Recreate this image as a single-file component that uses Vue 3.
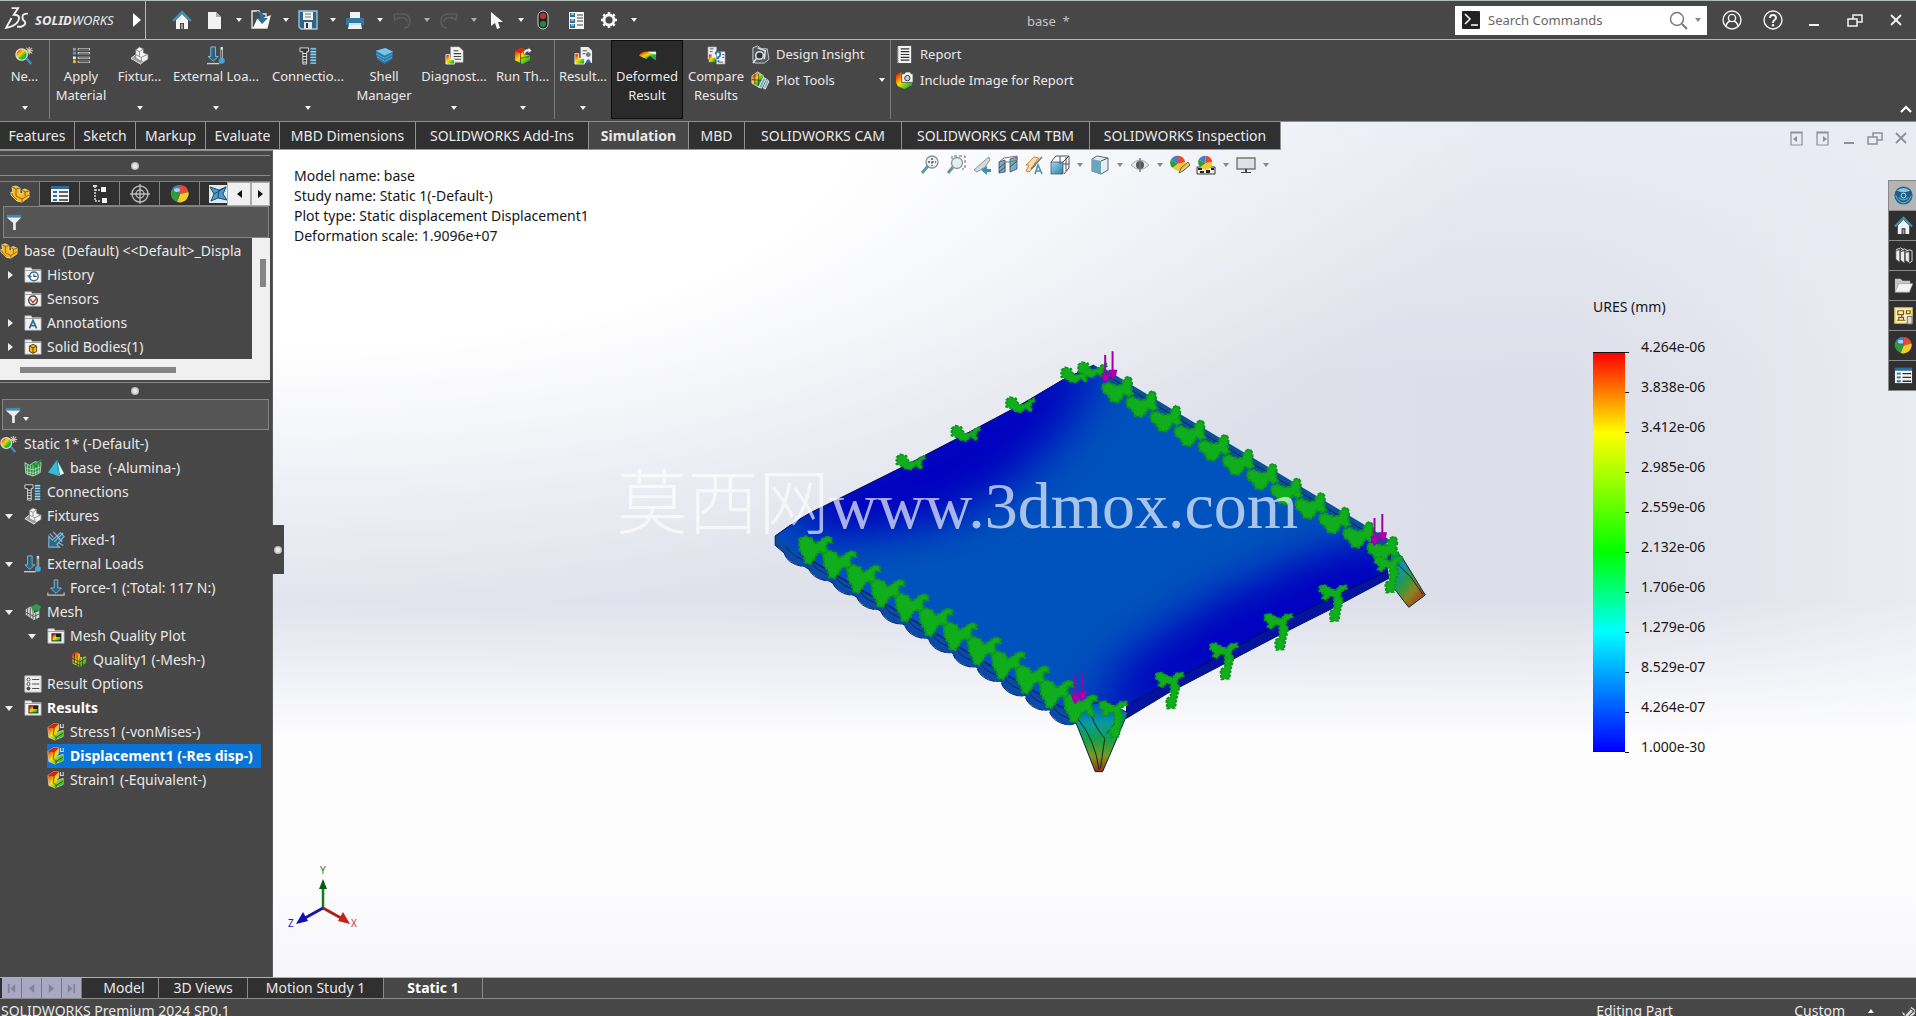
<script setup>
import { ref } from 'vue'

const search = ref('')
const filterTop = ref('')
const filterBottom = ref('')

const quick = [
  { icon: 'new', label: 'New' },
  { icon: 'open', label: 'Open' },
  { icon: 'save', label: 'Save' },
  { icon: 'print', label: 'Print' },
  { icon: 'undo', label: 'Undo', off: true },
  { icon: 'redo', label: 'Redo', off: true },
  { icon: 'cursor', label: 'Select' },
]

const commands = [
  { text: 'Ne...', icon: 'study', drop: true, sep: true },
  { text: 'Apply Material', icon: 'material' },
  { text: 'Fixtur...', icon: 'fixture', drop: true },
  { text: 'External Loa...', icon: 'loads', drop: true },
  { text: 'Connectio...', icon: 'connections', drop: true },
  { text: 'Shell Manager', icon: 'shell' },
  { text: 'Diagnost...', icon: 'diag', drop: true },
  { text: 'Run Th...', icon: 'run', drop: true, sep: true },
  { text: 'Result...', icon: 'results', drop: true },
  { text: 'Deformed Result', icon: 'deformed', on: true },
  { text: 'Compare Results', icon: 'compare' },
]

const tabs = ['Features', 'Sketch', 'Markup', 'Evaluate', 'MBD Dimensions', 'SOLIDWORKS Add-Ins',
  'Simulation', 'MBD', 'SOLIDWORKS CAM', 'SOLIDWORKS CAM TBM', 'SOLIDWORKS Inspection']

const paneTabs = ['part', 'props', 'config', 'target', 'ball', 'cam']

const featureTree = [
  { text: 'base  (Default) <<Default>_Displa', icons: ['part'], level: 0 },
  { text: 'History', icons: ['history'], level: 1, twisty: 'closed' },
  { text: 'Sensors', icons: ['sensors'], level: 1 },
  { text: 'Annotations', icons: ['annot'], level: 1, twisty: 'closed' },
  { text: 'Solid Bodies(1)', icons: ['bodies'], level: 1, twisty: 'closed' },
]

const studyTree = [
  { text: 'Static 1* (-Default-)', icons: ['study'], level: 0 },
  { text: 'base  (-Alumina-)', icons: ['meshbody', 'tet'], level: 1 },
  { text: 'Connections', icons: ['connections'], level: 1 },
  { text: 'Fixtures', icons: ['fixture'], level: 1, twisty: 'open' },
  { text: 'Fixed-1', icons: ['fixed'], level: 2 },
  { text: 'External Loads', icons: ['loads'], level: 1, twisty: 'open' },
  { text: 'Force-1 (:Total: 117 N:)', icons: ['force'], level: 2 },
  { text: 'Mesh', icons: ['mesh'], level: 1, twisty: 'open' },
  { text: 'Mesh Quality Plot', icons: ['plotfolder'], level: 2, twisty: 'open' },
  { text: 'Quality1 (-Mesh-)', icons: ['quality'], level: 3 },
  { text: 'Result Options', icons: ['options'], level: 1 },
  { text: 'Results', icons: ['plotfolder'], level: 1, twisty: 'open', bold: true },
  { text: 'Stress1 (-vonMises-)', icons: ['plot'], level: 2 },
  { text: 'Displacement1 (-Res disp-)', icons: ['plot'], level: 2, bold: true, selected: true },
  { text: 'Strain1 (-Equivalent-)', icons: ['plot'], level: 2 },
]

const views = [
  { icon: 'zoomfit' }, { icon: 'zoomarea' }, { icon: 'prev' }, { icon: 'section' }, { icon: 'dynannot' },
  { icon: 'orient', drop: true }, { icon: 'display', drop: true }, { icon: 'eye', drop: true },
  { icon: 'balledit' }, { icon: 'scene', drop: true }, { icon: 'monitor', drop: true },
]

const task = ['globe', 'home', 'library', 'folder', 'palette', 'ball', 'props']

const info = ['Model name: base', 'Study name: Static 1(-Default-)',
  'Plot type: Static displacement Displacement1', 'Deformation scale: 1.9096e+07']

const scale = ['4.264e-06', '3.838e-06', '3.412e-06', '2.985e-06', '2.559e-06', '2.132e-06',
  '1.706e-06', '1.279e-06', '8.529e-07', '4.264e-07', '1.000e-30']

const line = (n, x, y, dx, dy) => Array.from({ length: n }, (_, i) => [x + dx * i, y + dy * i])
const fixtures = [
  { shape: 'fx-left', at: line(12, 127, 627, 55.6, 43.2) },
  { shape: 'fx-right', at: line(12, 828, 148, 55.6, 43.6) },
  { shape: 'fx-top', at: [[345, 367], [472, 281], [598, 195], [725, 106], [764, 90]] },
  { shape: 'fx-front', at: [[815, 1108], [945, 1022], [1070, 934], [1196, 846], [1322, 760], [1450, 674]] },
]
const forces = [[796, 45], [813, 34], [1417, 534], [1435, 522], [727, 1008], [743, 998]]
const scallops = line(12, 86, 655, 55.6, 43.2)
</script>

<template>
  <svg class="defs" width="0" height="0" aria-hidden="true">
    <defs>
      <linearGradient id="rain" x1="0" y1="0" x2="1" y2="1">
        <stop offset="0.1" stop-color="#f01800" /><stop offset="0.4" stop-color="#ffd800" />
        <stop offset="0.65" stop-color="#22c020" /><stop offset="1" stop-color="#1890d0" />
      </linearGradient>
      <linearGradient id="warm" x1="0" y1="0" x2="1" y2="1">
        <stop offset="0.1" stop-color="#f02000" /><stop offset="0.45" stop-color="#ffe000" />
        <stop offset="0.8" stop-color="#30c020" /><stop offset="1" stop-color="#109030" />
      </linearGradient>
      <linearGradient id="blue" x1="0" y1="0" x2="1" y2="1">
        <stop offset="0" stop-color="#9fd8ef" /><stop offset="1" stop-color="#2b7fa8" />
      </linearGradient>
    </defs>
    <symbol id="home" viewBox="0 0 20 20"><path d="M4 10v9h4v-6h4v6h4v-9l-6-6z" fill="#f4f4f4" /><path d="M9 14h2v5H9z" fill="#999" /><path d="M1 11 10 2l9 9" fill="none" stroke="#3f8db8" stroke-width="2.4" /></symbol>
    <symbol id="new" viewBox="0 0 20 20"><path d="M4 2h8l5 5v12H4z" fill="#f2f2f2" /><path d="M12 2v5h5z" fill="#aaa" /></symbol>
    <symbol id="open" viewBox="0 0 20 20"><path d="M1 1h7l2 3h5v4l4-2-3 12H1z" fill="#4a4a4a" stroke="#eee" stroke-width="1.300" /><path d="M2 18 6 9l13-3-3 12z" fill="#fafafa" /><path d="M5 1q8 0 8 7h4l-6 6-5-6h3q0-4-4-7z" fill="#2d6f98" /></symbol>
    <symbol id="save" viewBox="0 0 20 20"><path d="M1 1h18v18H3l-2-2z" fill="#2f6488" stroke="#9cc9e6" stroke-width="1.300" /><path d="M5 2h10v8H5z" fill="#f0f0f0" /><path d="M7 4h6M7 7h6" stroke="#777" /><path d="M6 12h8v7H6z" fill="#dfe6ea" /><path d="M8 13h2v5H8z" fill="#333" /></symbol>
    <symbol id="print" viewBox="0 0 20 20"><path d="M5 2h10v6H5zM4 14h12l1 5H3z" fill="#f2f2f2" /><path d="M1 8h18v7H1z" fill="#2f7aa5" /><path d="M4 13h12v2H4z" fill="#cde4f0" /></symbol>
    <symbol id="undo" viewBox="0 0 20 20"><path d="M2 4h8q8 0 8 7t-6 7M6 8h5q4 0 4 4M2 4l1 6 5-3" fill="none" stroke="#6a6a6a" stroke-width="1.6" /></symbol>
    <symbol id="redo" viewBox="0 0 20 20"><path d="M18 4h-8q-8 0-8 7t6 7M14 8H9q-4 0-4 4M18 4l-1 6-5-3" fill="none" stroke="#6a6a6a" stroke-width="1.6" /></symbol>
    <symbol id="cursor" viewBox="0 0 20 20"><path d="M5 2v14l4-3 2 6 3-1-2-6h5z" fill="#f6f6f6" /></symbol>
    <symbol id="traffic" viewBox="0 0 20 20"><rect x="5" y="1" width="10" height="18" rx="5" fill="#222" stroke="#ccc" /><circle cx="10" cy="6" r="3" fill="#b8342c" /><circle cx="10" cy="14" r="3" fill="#258a3a" /></symbol>
    <symbol id="list" viewBox="0 0 20 20"><path d="M3 2h15v17H3z" fill="#f4f4f4" /><path d="M4 3h5v4H4zM4 9h5v4H4zM4 14h5v4H4z" fill="#2f6f96" /><path d="M11 5h6M11 8h6M11 11h6M11 15h6" stroke="#444" /><path d="M5 4h3M5 10h3M5 15h3" stroke="#fff" /></symbol>
    <symbol id="gear" viewBox="0 0 20 20"><circle cx="10" cy="10" r="5" fill="none" stroke="#f4f4f4" stroke-width="3" /><path d="M10 2v4M10 14v4M2 10h4M14 10h4M4.300 4.300l3 3M12.700 12.700l3 3M15.700 4.300l-3 3M7.300 12.700l-3 3" stroke="#f4f4f4" stroke-width="2.6" /><circle cx="10" cy="10" r="3.200" fill="#474747" /></symbol>
    <symbol id="user" viewBox="0 0 20 20"><g fill="none" stroke="#f4f4f4" stroke-width="1.400"><circle cx="10" cy="10" r="9" /><circle cx="10" cy="8" r="3.600" /><path d="M4 16q1-4 4-5M16 16q-1-4-4-5" /></g></symbol>
    <symbol id="help" viewBox="0 0 20 20"><g fill="none" stroke="#f4f4f4"><circle cx="10" cy="10" r="9" stroke-width="1.400" /><path d="M7 8q0-3 3-3t3 3q0 1-1.500 2T10 13" stroke-width="1.900" /></g><circle cx="10" cy="15.300" r="1.200" fill="#f4f4f4" /></symbol>
    <symbol id="min" viewBox="0 0 20 20"><path d="M5 14h10v2H5z" fill="currentColor" /></symbol>
    <symbol id="restore" viewBox="0 0 20 20"><path d="M3 9h9v7H3zM8 9V5h9v7h-5" fill="none" stroke="currentColor" stroke-width="1.500" /></symbol>
    <symbol id="close" viewBox="0 0 20 20"><path d="m5 5 10 10M15 5 5 15" stroke="currentColor" stroke-width="1.800" /></symbol>
    <symbol id="dockl" viewBox="0 0 20 20"><path d="M4 4h11v13H4zM4 5h11" fill="none" stroke="currentColor" stroke-width="1.200" /><path d="M10 8v6l-4-3z" fill="currentColor" /></symbol>
    <symbol id="dockr" viewBox="0 0 20 20"><path d="M4 4h11v13H4zM4 5h11" fill="none" stroke="currentColor" stroke-width="1.200" /><path d="M10 8v6l4-3z" fill="currentColor" /></symbol>
    <symbol id="prompt" viewBox="0 0 20 20"><rect x="1" y="1" width="18" height="18" rx="1" fill="#232323" /><path d="m4 4 5 5-5 5M10 15h7" fill="none" stroke="#fff" stroke-width="1.500" /></symbol>
    <symbol id="search" viewBox="0 0 20 20"><circle cx="9" cy="9" r="6.500" fill="none" stroke="#777" stroke-width="1.400" /><path d="m14 14 5 5" stroke="#777" stroke-width="2" /></symbol>

    <symbol id="study" viewBox="0 0 20 20"><circle cx="7" cy="9" r="6" fill="url(#rain)" stroke="#e4e4e4" stroke-width="1.300" /><path d="m12 13 5 6" stroke="#3c94cc" stroke-width="2.400" /><path d="m12 2 6 6M18 2l-6 6M15 1v8M11 5h8" stroke="#d8c8a8" stroke-width="1.200" /></symbol>
    <symbol id="material" viewBox="0 0 20 20"><path d="M1 2h3v3H1z" fill="#999" /><path d="M1 6h3v3H1z" fill="#55a0cc" /><path d="M1 11h3v3H1z" fill="#eee" /><path d="M1 15h3v3H1z" fill="#e8c020" /><path d="M6 3.500h13M6 7.500h13M6 12.500h13M6 16.500h13" stroke="#ddd" stroke-width="2.200" /><path d="M7 3.500h11M7 7.500h11M7 12.500h11M7 16.500h11" stroke="#333" /></symbol>
    <symbol id="fixture" viewBox="0 0 20 20"><path d="m1 13 5-4 11 5-6 5z" fill="#9a9fa2" stroke="#efefef" /><path d="m6 4 4-3 4 2v4l5 2v5l-5 3-8-4z" fill="#f4f4f4" stroke="#777" stroke-width=".8" /><path d="m6 9 6 3v4M12 12l6-3M6 4l4 2v4M10 6l4-3" fill="none" stroke="#888" /></symbol>
    <symbol id="loads" viewBox="0 0 20 20"><path d="M4 1h5v10h3l-5.500 5L1 11h3z" fill="#2c617f" stroke="#86bdda" /><path d="M0 18.500h13" stroke="#ccc" stroke-width="1.500" /><path d="M15.500 1v12" stroke="#ddd" stroke-width="2.600" /><path d="M15.500 4v10" stroke="#333" /><circle cx="15.500" cy="15.500" r="3.200" fill="#4aa3d8" /></symbol>
    <symbol id="connections" viewBox="0 0 20 20"><path d="M1 2h9v4H8v13H4V6H1z" fill="#333" stroke="#ddd" /><path d="M4 8h4M4 11h4M4 14h4M4 17h4" stroke="#eee" /><path d="M12 1h6v18h-6z" fill="#2d6685" /><path d="M12 3h6M12 6h6M12 9h6M12 12h6M12 15h6M12 18h6" stroke="#9fd0ea" stroke-width="1.500" /></symbol>
    <symbol id="shell" viewBox="0 0 20 20"><path d="m1 5 10-3 8 4-1 8-8 5-8-5z" fill="#2a7aa6" /><path d="m1 5 10-3 8 4-9 4z" fill="#7cc4e8" /><path d="m1 8 9 5 8-4M2 11l8 5 8-4" fill="none" stroke="#5aa8d0" /></symbol>
    <symbol id="diag" viewBox="0 0 20 20"><path d="M6 1h9l4 4v12H6z" fill="#f4f4f4" stroke="#bbb" stroke-width=".6" /><path d="M9 5h5M9 8h8M9 11h8M9 14h8" stroke="#444" stroke-width="1.200" /><path d="M1 9h4v5h5v5H1z" fill="url(#warm)" stroke="#fff" stroke-width=".8" /></symbol>
    <symbol id="run" viewBox="0 0 20 20"><path d="m2 5 6-3 5 2v5l5 1v5l-8 4-8-4z" fill="url(#warm)" /><path d="m2 5 6-3 5 2-5 4z" fill="#e02010" /><path d="M8 8v10M8 13l9-2" stroke="#333" stroke-width=".8" /><path d="M11 8q0-5 5-5V1l4 4-4 3V6q-3 0-3 3z" fill="#eee" stroke="#333" stroke-width=".6" /></symbol>
    <symbol id="results" viewBox="0 0 20 20"><path d="M7 1h8l4 4v13H7z" fill="#f0f0f0" /><path d="M9 5h5M9 8h3" stroke="#555" /><circle cx="15" cy="9" r="2.500" fill="#6a7a90" /><path d="M12 18q3-8 6 0z" fill="#31659c" /><path d="M1 8h4v5h6v6H1z" fill="url(#warm)" stroke="#fff" stroke-width=".8" /></symbol>
    <symbol id="deformed" viewBox="0 0 20 20"><path d="M1 10q3-5 9-4h9v9l-4-2v-1q-4-3-6 2z" fill="url(#rain)" /><path d="M10 6h9v3l-5-1z" fill="#e8f4ff" /></symbol>
    <symbol id="compare" viewBox="0 0 20 20"><path d="M1 1h9v13H1zM10 6h9v13h-9z" fill="#f2f2f2" stroke="#999" stroke-width=".7" /><path d="M3 3h4M3 6h3M16 9h2M16 12h2M12 17h5" stroke="#555" /><path d="M2 9h3v3h4v5H2z" fill="url(#warm)" /><path d="M9 9q0-3 2.500-3T14 9q0 2-2.500 3v2M11 16h2" fill="none" stroke="#1a78b8" stroke-width="1.800" /></symbol>
    <symbol id="insight" viewBox="0 0 20 20"><path d="m2 3 5-2 4 3h6l2 11-5 4H4l-2-3z" fill="#50585c" stroke="#c9d2d6" /><circle cx="9" cy="11" r="4" fill="#333" stroke="#cfe3ee" stroke-width="1.600" /><path d="m6 14-4 5M7 3l8 3-1 9" stroke="#dde6ea" stroke-width="1.600" fill="none" /></symbol>
    <symbol id="plottools" viewBox="0 0 20 20"><path d="m1 5 6-4 6 4v8l-5 4-7-4z" fill="url(#rain)" stroke="#ddd" stroke-width=".9" /><path d="M4 3v11M8 3v12M1 9l11 1" stroke="#333" stroke-width=".8" /><path d="m8 17 5-10 3 1-5 10zM13 18l4-9 2 2-4 8z" fill="#7fb0ba" stroke="#f0f4f5" stroke-width=".9" /></symbol>
    <symbol id="report" viewBox="0 0 20 20"><path d="M3 1h14v18H3z" fill="#f4f4f4" /><path d="M6 4h9M6 7h9M6 10h9M6 13h9M6 16h9" stroke="#333" stroke-width="1.300" /><path d="M3 2v17" stroke="#999" stroke-dasharray="1 1" stroke-width="2" /></symbol>
    <symbol id="imgreport" viewBox="0 0 20 20"><path d="m1 4 6-3v11l11-1v4l-8 4-7-3-2-4z" fill="url(#warm)" /><path d="M7 3h3l1-2h5l1 2h2v9H7z" fill="#f4f4f4" stroke="#444" stroke-width=".8" /><circle cx="13" cy="7.500" r="2.800" fill="#ccc" stroke="#333" /></symbol>

    <symbol id="part" viewBox="0 0 20 20"><path d="m2 3 4-1 4 2v6l3-1-1-3 3-1 4 2v6l-7 5-5-1-6-6V8l2 1z" fill="#f6b81c" stroke="#fbe9b0" stroke-width=".8" /><path d="m2 3 4 2 4-1M6 5v7l6 3 7-4M12 6l3 2 4-1M15 8v4M12 15v3M2 9v2l5 5" fill="none" stroke="#8a5a0c" stroke-width=".9" /></symbol>
    <symbol id="props" viewBox="0 0 20 20"><path d="M1 2h18v16H1z" fill="#f2f2f2" /><path d="M1 2h18v3H1z" fill="#2a6d99" /><path d="M3 7h4v2H3zM3 11h4v2H3zM3 15h4v2H3z" fill="#2a6d99" /><path d="M9 8h9M9 12h9M9 16h9" stroke="#333" stroke-width="1.500" /></symbol>
    <symbol id="config" viewBox="0 0 20 20"><path d="M5 2v15h6M5 6h6" fill="none" stroke="#ddd" stroke-width="1.500" stroke-dasharray="2 1" /><path d="M11 3h5v5h-5zM12 14h5v5h-5z" fill="#f4f4f4" /><path d="M3 1h4v2H3z" fill="#ddd" /></symbol>
    <symbol id="target" viewBox="0 0 20 20"><g fill="none" stroke="#b9b9b9" stroke-width="1.400"><circle cx="10" cy="10" r="8" /><circle cx="10" cy="10" r="4" /><path d="M10 0v20M0 10h20" /></g></symbol>
    <symbol id="ball" viewBox="0 0 20 20"><path d="M10 10V1a9 9 0 0 1 8.500 7z" fill="#e84a38" /><path d="M10 10 18.500 8A9 9 0 0 1 7 18z" fill="#f4cc28" /><path d="M10 10 7 18a9 9 0 0 1-5-13z" fill="#2f9a3e" /><path d="M10 10 2 5a9 9 0 0 1 8-4z" fill="#3b82d0" /><ellipse cx="7" cy="6" rx="3" ry="2" fill="#fff" opacity=".6" /></symbol>
    <symbol id="balls" viewBox="0 0 20 20"><path d="M10 11 1 6a10 10 0 0 1 9-5z" fill="#3b82d0" /><path d="M10 11V1a10 10 0 0 1 9 8z" fill="#e84a38" /><path d="M10 11 19 9A9 9 0 0 1 3 16z" fill="#f4cc28" /><path d="M10 11 3 16a9 9 0 0 1-2-10z" fill="#2f9a3e" /></symbol>
    <symbol id="cam" viewBox="0 0 20 20"><path d="M1 1h18v18H1z" fill="#dfeaf0" /><path d="m2 3 9 3 7-3-3 7 4 6-9-2-7 3 3-7z" fill="#4d9bc4" stroke="#1c4d6c" /><path d="m6 10 12-7M10 14l1-8" stroke="#1c4d6c" /></symbol>
    <symbol id="filter" viewBox="0 0 20 20"><path d="M2 2h16v3H2z" fill="#3c8ab5" /><path d="M2 5h16l-6 6v8H9v-8z" fill="#eee" /></symbol>
    <symbol id="bin" viewBox="0 0 20 20"><path d="M1 2h7l1 2h10v14H1z" fill="#f2f2f2" stroke="#aaa" stroke-width=".8" /><path d="M1 5h18" stroke="#999" /></symbol>
    <symbol id="history" viewBox="0 0 20 20"><use href="#bin" /><circle cx="11" cy="11.500" r="4.800" fill="#fff" stroke="#356f96" stroke-width="1.600" /><path d="M11 8.500v3h3" fill="none" stroke="#444" stroke-width="1.200" /><path d="m3 10 3 4 3-3z" fill="#356f96" /></symbol>
    <symbol id="sensors" viewBox="0 0 20 20"><use href="#bin" /><circle cx="10" cy="11.500" r="4.800" fill="#eee" stroke="#444" stroke-width="1.600" /><path d="m7 10 3 4 4-5" fill="none" stroke="#c03a30" stroke-width="1.600" /></symbol>
    <symbol id="annot" viewBox="0 0 20 20"><use href="#bin" /><path d="m6 16 4-9 4 9M7.500 13h5" fill="none" stroke="#2d6e98" stroke-width="1.900" /></symbol>
    <symbol id="bodies" viewBox="0 0 20 20"><use href="#bin" /><path d="m6 9 4-2 4 2v6l-4 2-4-2z" fill="#f2b71a" stroke="#5a3c08" /><path d="M10 11v6M6 9l4 2 4-2" stroke="#5a3c08" fill="none" /></symbol>

    <symbol id="meshbody" viewBox="0 0 20 20"><path d="m1 4 5 3 6-4 7 1-1 11-8 4-8-3z" fill="#2f8a44" stroke="#b5d8b8" /><path d="M4 6v12M7 7v11M10 6v13M13 5v13M16 4v12M2 10l8 2 8-3M2 14l8 2 8-3" stroke="#bfe6c4" stroke-width=".8" fill="none" /><path d="m10 5 3 3 6-7" stroke="#169a30" stroke-width="2.400" fill="none" /></symbol>
    <symbol id="tet" viewBox="0 0 20 20"><path d="m11 1 8 15-6 3z" fill="#d5f6fb" /><path d="M11 1 1 15l12 4z" fill="#35bcd2" /><path d="m11 1 3 17" stroke="#0d7d92" /></symbol>
    <symbol id="fixed" viewBox="0 0 20 20"><path d="M2 6v12h12l-3-3 8-9-4-4-9 8z" fill="#2f6484" stroke="#7eb3d2" stroke-width="1.300" /><path d="m7 1 10 11M18 2 8 12M3 3l4 4M13 13l5 3" stroke="#8bbcd8" stroke-width="1.300" /></symbol>
    <symbol id="force" viewBox="0 0 20 20"><path d="M8 1h4v9h4l-6 6-6-6h4z" fill="#2c617f" stroke="#86bdda" /><path d="M1 15v3h18v-3" fill="none" stroke="#c5c5c5" stroke-width="1.300" /></symbol>
    <symbol id="mesh" viewBox="0 0 20 20"><path d="m2 7 5-3 4 2v5l6-2v7l-6 3-9-6z" fill="#d4d8d5" /><path d="M4 6v8M7 5v11M10 6v12M13 11v7M2 10l9 5 6-3" stroke="#555" fill="none" /><path d="m8 4 6-3 5 3-2 5-8-1z" fill="#2f9a4a" /></symbol>
    <symbol id="plotfolder" viewBox="0 0 20 20"><use href="#bin" /><path d="M5 7h11v9H5z" fill="#222" /><path d="M6 8h4v3h5v4H6z" fill="url(#warm)" /></symbol>
    <symbol id="quality" viewBox="0 0 20 20"><path d="m2 4 5-3 4 2v4l7-1v7l-7 5-8-4z" fill="url(#warm)" /><path d="M5 3v11M8 5v12M11 7v11M14 6v10M2 8l9 4 7-4M3 12l8 4" stroke="#333" stroke-width=".9" fill="none" /></symbol>
    <symbol id="options" viewBox="0 0 20 20"><path d="M1 1h18v18H1z" fill="#eee" stroke="#bbb" /><circle cx="5" cy="5" r="1.700" fill="#fff" stroke="#444" /><circle cx="5" cy="10" r="1.700" fill="#fff" stroke="#444" /><circle cx="5" cy="15" r="1.700" fill="#444" stroke="#444" /><path d="M9 5h8M9 10h8M9 15h8" stroke="#555" stroke-width="1.300" /></symbol>
    <symbol id="plot" viewBox="0 0 20 20"><path d="m1 5 6-4h6v6l-3 4 8-3v7l-9 4-7-3z" fill="url(#warm)" stroke="#ddd" stroke-width=".7" /><path d="m1 5 6-4h6L8 6z" fill="#d82012" /><path d="m8 6-1 7 3 3 8-5M10 16v3" stroke="#333" stroke-width=".9" fill="none" /><path d="M15 1v4h3V1" fill="none" stroke="#d0d8e0" stroke-width="1.200" /></symbol>

    <symbol id="zoomfit" viewBox="0 0 20 20"><circle cx="12" cy="7" r="6" fill="#e9eef0" stroke="#8a9498" stroke-width="1.300" /><path d="M12 3v8M8 7h8" stroke="#555" stroke-dasharray="2 1.500" stroke-width="1.500" /><path d="m8 11-6 7" stroke="#5f97aa" stroke-width="3" /></symbol>
    <symbol id="zoomarea" viewBox="0 0 20 20"><path d="M6 4V1h13v13h-3" fill="none" stroke="#666" stroke-dasharray="3 2" /><circle cx="11" cy="8" r="5.500" fill="#e2eef2" stroke="#8a9498" stroke-width="1.300" /><path d="m7 12-5 6" stroke="#5f97aa" stroke-width="3" /></symbol>
    <symbol id="prev" viewBox="0 0 20 20"><path d="m2 15 10-9 5-4 1 3-5 7-8 5z" fill="#d5dadc" stroke="#8a9498" /><path d="M19 14h-4v-3l-6 4 6 5v-3h4z" fill="#3f8fb4" /></symbol>
    <symbol id="section" viewBox="0 0 20 20"><path d="m1 7 6-2v12l-6 1zM12 4l7-2v12l-7 3z" fill="#77aec2" stroke="#446" stroke-width=".8" /><path d="m1 7 5-4 13-2v4l-7 2H7v10" fill="none" stroke="#777" /><path d="m1 13 6-5M1 17l6-5M12 12l7-6" stroke="#23566c" /></symbol>
    <symbol id="dynannot" viewBox="0 0 20 20"><path d="m2 10 8-8 5 1-5 6 2 1-7 7-3-1 3-6z" fill="#f5dcae" stroke="#c78a3a" /><path d="m11 19 3-9 4 9M12 16h5" fill="none" stroke="#4a8fae" stroke-width="1.600" /><path d="M7 14 18 2" stroke="#777" stroke-width="1.500" /></symbol>
    <symbol id="orient" viewBox="0 0 20 20"><path d="m1 7 5-6h13v12l-5 6" fill="none" stroke="#555" /><path d="M1 7h12v12H1z" fill="url(#blue)" stroke="#456" stroke-width=".8" /><path d="M10 1v8M13 9h6M13 7l6-6M16 2v14" stroke="#555" /></symbol>
    <symbol id="display" viewBox="0 0 20 20"><path d="m2 4 5-3 11 2v12l-7 4-9-3z" fill="#e4edf0" stroke="#556" stroke-width=".9" /><path d="m2 4 9 2v13l-9-3z" fill="#6ba6bd" /><path d="m11 6 7-3" stroke="#556" /></symbol>
    <symbol id="eye" viewBox="0 0 20 20"><path d="M1 10q9-10 18 0-9 9-18 0z" fill="#e8e8e8" stroke="#aaa" /><circle cx="10" cy="10" r="4" fill="#555" /><path d="M10 3v14" stroke="#777" stroke-width="1.400" /></symbol>
    <symbol id="balledit" viewBox="0 0 20 20"><use href="#balls" width="16" height="16" /><path d="m9 18 2-5 7-6 2 3-7 6z" fill="#e9c95e" stroke="#444" stroke-width=".8" /></symbol>
    <symbol id="scene" viewBox="0 0 20 20"><path d="M1 12h18v7H1z" fill="#eee" stroke="#333" /><path d="M2 13h4v2H2zM10 15h4v3h-4zM15 13h3v2h-3zM4 16h4v2H4z" fill="#222" /><use href="#balls" x="2" width="15" height="15" /></symbol>
    <symbol id="monitor" viewBox="0 0 20 20"><path d="M1 3h18v11H1z" fill="#dfe1e4" stroke="#777" stroke-width="1.400" /><path d="M9 14h2v3h4v1H5v-1h4z" fill="#444" /></symbol>

    <symbol id="globe" viewBox="0 0 20 20"><circle cx="10" cy="10" r="9.500" fill="#1f5f87" /><path d="M3 5q7-6 14 0-7 3-14 0z" fill="#8cc4e0" /><path d="M2 10q1 6 8 8 7-2 8-8M5 12q5 5 10 0" stroke="#6aa8c8" stroke-width="1.200" fill="none" /><circle cx="10" cy="10" r="2.500" fill="none" stroke="#bfe0f0" /></symbol>
    <symbol id="library" viewBox="0 0 20 20"><path d="m2 5 4-1v13l-4-3zM7 6l4-1v13l-4-3zM12 7l4-1v12l-4-3z" fill="#f0f0f0" stroke="#555" stroke-width=".7" /><path d="m2 4 5-2 3 2M7 5l4-2 4 2M12 6l4-2 3 1v11l-3 2" stroke="#ddd" fill="none" /></symbol>
    <symbol id="folder" viewBox="0 0 20 20"><path d="M1 3h6l2 2h8v12H1z" fill="#c6c6c6" /><path d="m5 8h15l-4 9H1z" fill="#f4f4f4" stroke="#888" stroke-width=".6" /></symbol>
    <symbol id="palette" viewBox="0 0 20 20"><path d="M1 2h18v16H1z" fill="#fbf3c8" stroke="#f0d060" stroke-width="1.500" /><path d="M4 5h6v4H4zM13 5h4v3h-4zM5 12h5v3H5zM3 15h9M8 9v4" fill="none" stroke="#7a5c10" stroke-width="1.300" /><path d="M14 11h5v8h-5z" fill="#ddd" stroke="#666" /></symbol>
    <symbol id="reporticon" viewBox="0 0 20 20"><path d="m1 10 5 4 8-10 5 4v6l-8 6-9-5z" fill="#ddd" stroke="#444" /><path d="m5 16 8-9 4 3-7 7" fill="none" stroke="#444" stroke-width="1.400" /></symbol>
  </svg>

  <div class="app">
    <header class="title">
      <div class="brand">
        <svg class="ds" viewBox="0 0 22 22"><path d="M6 2h6L8 8q7 0 4 6-3 5-11 6l5-9M21 7q-5 0-5 3t2 4q2 3-3 5h-4" fill="none" stroke="#f2f2f2" stroke-width="1.700" /></svg>
        <span class="word"><b>SOLID</b>WORKS</span>
        <i class="play"></i>
      </div>
      <nav class="quick">
        <button class="qb" aria-label="Home"><svg class="ic"><use href="#home" /></svg></button>
        <button v-for="q in quick" :key="q.icon" class="qb pair" :class="{ off: q.off }" :aria-label="q.label">
          <svg class="ic"><use :href="'#' + q.icon" /></svg><i class="caret"></i>
        </button>
        <button class="qb wide" aria-label="Rebuild"><svg class="ic"><use href="#traffic" /></svg></button>
        <button class="qb wide" aria-label="File properties"><svg class="ic"><use href="#list" /></svg></button>
        <button class="qb pair" aria-label="Options"><svg class="ic"><use href="#gear" /></svg><i class="caret"></i></button>
      </nav>
      <div class="doc">base&nbsp; *</div>
      <div class="right">
        <label class="search">
          <svg class="ic"><use href="#prompt" /></svg>
          <input v-model="search" placeholder="Search Commands" aria-label="Search Commands">
          <svg class="ic"><use href="#search" /></svg><i class="caret dim"></i>
        </label>
        <button v-for="w in ['user', 'help', 'min', 'restore', 'close']" :key="w" class="win" :aria-label="w"><svg class="ic"><use :href="'#' + w" /></svg></button>
      </div>
    </header>

    <section class="ribbon">
      <button v-for="c in commands" :key="c.text" class="cmd" :class="{ sep: c.sep, on: c.on }">
        <svg class="ic"><use :href="'#' + c.icon" /></svg>
        <span>{{ c.text }}</span>
        <i v-if="c.drop" class="caret"></i>
      </button>
      <div class="stack sep">
        <button class="row"><svg class="ic"><use href="#insight" /></svg>Design Insight</button>
        <button class="row"><svg class="ic"><use href="#plottools" /></svg>Plot Tools<i class="caret end"></i></button>
      </div>
      <div class="stack">
        <button class="row"><svg class="ic"><use href="#report" /></svg>Report</button>
        <button class="row"><svg class="ic"><use href="#imgreport" /></svg>Include Image for Report</button>
      </div>
      <button class="collapse" aria-label="Collapse"><svg viewBox="0 0 12 8" width="12" height="8"><path d="m1 7 5-5 5 5" fill="none" stroke="#fff" stroke-width="2.200" /></svg></button>
    </section>

    <main class="work">
      <div class="tabrow">
        <nav class="tabs"><button v-for="t in tabs" :key="t" :class="{ active: t === 'Simulation' }">{{ t }}</button></nav>
        <div class="mdi">
          <button v-for="m in ['dockl', 'dockr', 'min', 'restore', 'close']" :key="m" :aria-label="m"><svg class="ic"><use :href="'#' + m" /></svg></button>
        </div>
      </div>

      <div class="body">
        <aside class="side">
          <div class="split first"><i class="dot"></i></div>
          <nav class="ptabs">
            <button v-for="(p, i) in paneTabs" :key="p" :class="{ active: i === 0 }" :aria-label="p"><svg class="ic"><use :href="'#' + p" /></svg></button>
            <button class="arrow" aria-label="Previous"><i class="tri left"></i></button>
            <button class="arrow" aria-label="Next"><i class="tri"></i></button>
          </nav>
          <label class="filter"><svg class="ic"><use href="#filter" /></svg><input v-model="filterTop" aria-label="Filter features"></label>
          <div class="pane">
            <ul class="tree">
              <li v-for="n in featureTree" :key="n.text" :class="'lv' + n.level">
                <span v-if="n.level" class="tw"><i v-if="n.twisty" :class="n.twisty"></i></span>
                <svg v-for="k in n.icons" :key="k" class="ic"><use :href="'#' + k" /></svg><span class="tx">{{ n.text }}</span>
              </li>
            </ul>
            <div class="vbar"><i></i></div>
          </div>
          <div class="hbar"><i></i></div>
          <div class="split second"><i class="dot"></i></div>
          <label class="filter low"><svg class="ic"><use href="#filter" /></svg><i class="caret"></i><input v-model="filterBottom" aria-label="Filter study"></label>
          <ul class="tree study">
            <li v-for="n in studyTree" :key="n.text" :class="['lv' + n.level, { bold: n.bold }]">
              <span v-if="n.level" class="tw"><i v-if="n.twisty" :class="n.twisty"></i></span>
              <span class="node" :class="{ selected: n.selected }"><svg v-for="k in n.icons" :key="k" class="ic"><use :href="'#' + k" /></svg><span class="tx">{{ n.text }}</span></span>
            </li>
          </ul>
          <button class="handle" aria-label="Hide panel"><i class="dot"></i></button>
        </aside>

        <section class="view">
          <svg class="model" viewBox="0 0 1568 1320" preserveAspectRatio="none">
            <defs>
              <clipPath id="face"><path d="M35 588Q100 525 145 500L330 380 470 285 600 195 700 118 770 75 1420 585 1455 640 1445 695 1320 770 1190 855 1065 945 940 1030 845 1095 790 1115 720 1120 90 640z" /></clipPath>
              <linearGradient id="foot" x1="0" y1="0" x2="0" y2="1"><stop offset="0" stop-color="#0050c8" /><stop offset=".3" stop-color="#0899a0" /><stop offset=".55" stop-color="#16a044" /><stop offset=".78" stop-color="#7a9a20" /><stop offset="1" stop-color="#a02c10" /></linearGradient>
              <linearGradient id="foot2" x1="0" y1="0" x2=".7" y2="1"><stop offset="0" stop-color="#0060c8" /><stop offset=".35" stop-color="#1090b0" /><stop offset=".6" stop-color="#2a9a48" /><stop offset=".8" stop-color="#8a8420" /><stop offset="1" stop-color="#a8401c" /></linearGradient>
              <filter id="soft" x="-50%" y="-50%" width="200%" height="200%"><feGaussianBlur stdDeviation="60" /></filter>
              <g id="fx-left"><path transform="scale(1.15 1.2)" d="M-32-25-20-32-6-26 0-12 12-22 20-30 32-30 34-16 24-18 22-4 26 10 28 22 18 20 12 8 4 12-2 26-10 38-20 34-22 20-30 5z" /></g>
              <g id="fx-right"><path transform="scale(1.15 1.3)" d="M-34-10-22-16-6-8 6-10 10-24 20-30 26-20 24-2 28 10 20 16 10 10 6 20-2 30-16 28-22 14-32 6z" /></g>
              <g id="fx-top"><path d="M-30-15-22-24-8-20-5-8 2 0 14-4 24-14 34-20 36-12 28-6 26 6 30 18 22 18 14 8 4 22-8 20-20 10-30 6z" /></g>
              <g id="fx-front"><path d="M-32-20-22-26-8-16 6-8 14-22 30-24 32-14 20-6 16 6 22 20 16 50 12 82-6 84-8 56 2 46 2 10-8 8-16 20-26 16-22 4-32-6z" /></g>
            </defs>
            <path d="M35 588v28L70 655 720 1150 750 1150 720 1100 90 620z" fill="#0c48a0" stroke="#04204e" vector-effect="non-scaling-stroke" />
            <ellipse v-for="(s, i) in scallops" :key="'s' + i" :transform="`translate(${s[0]} ${s[1]}) rotate(38)`" rx="35" ry="17" fill="#0b4aa6" />
            <path v-for="(s, i) in scallops" :key="'c' + i" :transform="`translate(${s[0]} ${s[1]})`" d="M-30-14q8 30 40 38M-24-34q14 34 50 42" fill="none" stroke="#062a66" vector-effect="non-scaling-stroke" />
            <path d="m845 1135 95-75 125-85 125-85 130-85 130-90-5-40-600 400z" fill="#0414a0" stroke="#001060" vector-effect="non-scaling-stroke" />
            <g clip-path="url(#face)">
              <path d="M0 0h1568v1320H0z" fill="#0052bc" />
              <g filter="url(#soft)" fill="#0000bf">
                <path d="M40 500 700 30 780 60 720 240 610 400 440 540 160 600z" />
                <path d="M760 1200 1540 780 1480 570 1280 640 1030 790 840 960z" />
              </g>
            </g>
            <path d="M35 588Q100 525 145 500L330 380 470 285 600 195 700 118 770 75M845 1095l95-65 125-85 125-90 130-85 125-75M90 640l630 480" fill="none" stroke="#000a50" vector-effect="non-scaling-stroke" />
            <path d="m780 90 665 520" fill="none" stroke="#0a5098" stroke-width="9" vector-effect="non-scaling-stroke" />
            <path d="m776 88 650 510" fill="none" stroke="#06245a" vector-effect="non-scaling-stroke" />
            <path d="M1455 618 1482 655 1534 765 1496 802 1462 745 1452 680z" fill="url(#foot2)" stroke="#123" vector-effect="non-scaling-stroke" />
            <path d="m1460 660 40 50 28 52" fill="none" stroke="#123" vector-effect="non-scaling-stroke" />
            <path d="M720 1120 748 1212 773 1295H790L833 1165 848 1118 800 1085 745 1095z" fill="url(#foot)" stroke="#123" vector-effect="non-scaling-stroke" />
            <path d="M732 1135q40 60 50 155M765 1130q12 40 30 65l-10 90M800 1180l35-60" fill="none" stroke="#123" vector-effect="non-scaling-stroke" />
            <g class="fx">
              <template v-for="f in fixtures" :key="f.shape">
                <use v-for="(p, i) in f.at" :key="i" :href="'#' + f.shape" :x="p[0]" :y="p[1]" />
              </template>
            </g>
            <path v-for="(p, i) in forces" :key="'f' + i" :d="`M${p[0]} ${p[1]}v58m-7 0 3 14 4 8 6-8 2-14z`" fill="#b400b4" stroke="#a000a8" stroke-width="2" vector-effect="non-scaling-stroke" />
          </svg>

          <div class="mark"><span class="cjk">莫西网</span><span>www.3dmox.com</span></div>

          <div class="hud">
            <button v-for="v in views" :key="v.icon" :class="{ drop: v.drop }" :aria-label="v.icon"><svg class="ic"><use :href="'#' + v.icon" /></svg><i v-if="v.drop" class="caret dim"></i></button>
          </div>

          <div class="info"><div v-for="l in info" :key="l">{{ l }}</div></div>

          <div class="legend">
            <div class="lt">URES (mm)</div>
            <div class="lb">
              <div class="bar"></div>
              <div class="ticks"><i v-for="s in scale" :key="s"></i></div>
              <div class="vals"><span v-for="s in scale" :key="s">{{ s }}</span></div>
            </div>
          </div>

          <svg class="triad" viewBox="0 0 72 64" width="72" height="64">
            <path d="M36 42V20" stroke="#18781c" stroke-width="2.500" /><path d="m32 23 4-10 4 10z" fill="#0c5a14" />
            <path d="m36 42 18 10" stroke="#b02018" stroke-width="3" /><path d="m51 55 5-9 7 12z" fill="#c02418" />
            <path d="M36 42 18 52" stroke="#1818a8" stroke-width="3" /><path d="m16 46 5 9-12 3z" fill="#1010b0" />
            <text x="33" y="8" fill="#188030">Y</text><text x="64" y="61" fill="#c83030">X</text><text x="1" y="61" fill="#2020c0">Z</text>
          </svg>

          <nav class="task"><button v-for="(t, i) in task" :key="t" :class="{ active: i === 0 }" :aria-label="t"><svg class="ic"><use :href="'#' + t" /></svg></button></nav>
        </section>
      </div>
    </main>

    <div class="sheets">
      <div class="steps">
        <button aria-label="First"><svg viewBox="0 0 12 12"><path d="M2 1v10h2V1zM10 1v10L5 6z" /></svg></button>
        <button aria-label="Back"><svg viewBox="0 0 12 12"><path d="M9 1v10L3 6z" /></svg></button>
        <button aria-label="Forward"><svg viewBox="0 0 12 12"><path d="M3 1v10l6-5z" /></svg></button>
        <button aria-label="Last"><svg viewBox="0 0 12 12"><path d="M2 1v10l5-5zM8 1v10h2V1z" /></svg></button>
      </div>
      <button class="sheet first-sheet">Model</button><button class="sheet">3D Views</button><button class="sheet">Motion Study 1</button><button class="sheet active">Static 1</button>
    </div>
    <footer class="status">
      <span class="ver">SOLIDWORKS Premium 2024 SP0.1</span>
      <span class="mode">Editing Part</span>
      <button class="unit">Custom<i class="caret up"></i></button>
      <svg class="ic"><use href="#reporticon" /></svg>
    </footer>
  </div>
</template>

<style>
body { margin: 0; background: #474747; }
</style>

<style scoped>
* { box-sizing: border-box; }
.defs { position: absolute; }
.app { height: 100vh; display: flex; flex-direction: column; overflow: hidden; background: #474747; color: #e9e9e9; font: 14px/24px "Noto Sans", "Open Sans", sans-serif; }
button { border: 0; padding: 0; margin: 0; background: none; color: inherit; font: inherit; }
input { border: 0; outline: 0; background: none; color: inherit; font: inherit; min-width: 0; flex: 1; padding: 0; }
ul { list-style: none; margin: 0; padding: 0; }
.ic { width: 20px; height: 20px; flex: none; display: block; }
.caret { width: 0; height: 0; flex: none; border: 3px solid transparent; border-top: 4px solid #f2f2f2; border-bottom: 0; }
.caret.dim { border-top-color: #888; }
.caret.up { border-top: 0; border-bottom: 4px solid #f2f2f2; }

.title { flex: none; height: 40px; display: flex; align-items: flex-start; border-top: 1px solid #b4bcb8; border-bottom: 1px solid #b8b8b8; }
.brand { width: 146px; height: 38px; flex: none; display: flex; align-items: center; border-right: 1px solid #b8b8b8; padding-left: 4px; }
.ds { width: 26px; height: 24px; margin-bottom: 4px; }
.word { flex: 1; margin-left: 5px; font-size: 13px; font-style: italic; }
.play { border: 7px solid transparent; border-left: 8px solid #fff; border-right: 0; margin-right: 4px; }
.quick { display: flex; margin-left: 26px; align-items: center; height: 38px; }
.qb { display: flex; align-items: center; margin-right: 12px; }
.qb.pair { gap: 12px; margin-right: 9px; }
.qb.wide { margin-right: 13px; }
.off { opacity: 0.6; }
.doc { flex: 1; font-size: 13px; color: #c4c4c4; text-align: left; padding-left: 381px; height: 38px; line-height: 40px; white-space: nowrap; overflow: hidden; }
.right { display: flex; align-items: center; height: 38px; }
.search { width: 252px; height: 29px; background: #fff; display: flex; align-items: center; padding: 0 6px; gap: 7px; color: #555; font-size: 13px; margin-right: 4px; }
.search input::placeholder { color: #666; opacity: 1; }
.win { width: 41px; display: flex; justify-content: center; color: #f4f4f4; }

.ribbon { flex: none; height: 81px; padding-bottom: 2px; display: grid; grid-template-columns: 50px 62px 55px 98px 86px 66px 74px 64px 56px 72px 66px 142px 1fr 20px; font-size: 13px; line-height: 19px; }
.cmd { display: flex; flex-direction: column; align-items: center; padding: 6px 0 9px; text-align: center; }
.cmd .ic { width: 19px; height: 19px; }
.cmd span { margin-top: 2px; padding: 0 1px; }
.cmd .caret { margin-top: auto; }
.sep { border-right: 1px solid #7c7c7c; }
.cmd.on { background: #2a2a2a; border: 1px solid #0c0c0c; padding-top: 5px; }
.stack { padding: 1px 5px 0 2px; display: flex; flex-direction: column; }
.row { display: flex; align-items: center; height: 26px; gap: 6px; width: 100%; white-space: nowrap; }
.row .ic { width: 19px; height: 19px; }
.end { margin-left: auto; }
.stack + .stack { padding-left: 4px; }
.collapse { align-self: end; height: 21px; }

.work { flex: 1; min-height: 0; display: flex; flex-direction: column; background:
  linear-gradient(180deg, transparent 0 56%, #fdfdfe 72%, #fdfdfe 88%, #f6f6fb 100%),
  radial-gradient(ellipse 62% 58% at 16% 0%, #fff 45%, transparent 100%),
  linear-gradient(180deg, #e9ecf4 0, transparent 30%),
  linear-gradient(90deg, #e2e4ee 0, #dcdee9 82%, #eaecf3 100%); }
.tabrow { flex: none; height: 29px; display: flex; justify-content: space-between; border-top: 1px solid #8f8f8f; }
.tabs { display: grid; grid-template-columns: 75px 61px 70px 74px 136px 173px 100px 56px 157px 188px 191px; background: #303030; border-bottom: 1px solid #9a9a9a; }
.tabs button { border-right: 1px solid #909090; white-space: nowrap; }
.tabs .active { background: #474747; font-weight: 700; }
.mdi { display: flex; align-items: center; gap: 6px; color: #8c9097; padding-right: 5px; padding-top: 3px; }
.body { flex: 1; min-height: 0; display: flex; }

.side { width: 273px; flex: none; background: #474747; position: relative; border-top: 1px solid #8f8f8f; border-right: 1px solid #5c5c5c; display: flex; flex-direction: column; }
.dot { width: 8px; height: 8px; border-radius: 50%; background: radial-gradient(#e8e8e8 30%, #8a8a8a); }
.split { display: flex; align-items: center; justify-content: center; border-top: 1px solid #8a8a8a; width: 270px; flex: none; }
.first { height: 21px; margin: 4px 0 5px; border-bottom: 1px solid #8a8a8a; }
.second { height: 17px; margin-top: 2px; }
.ptabs { display: flex; width: 270px; height: 25px; flex: none; border-top: 1px solid #808080; }
.ptabs button { width: 40px; flex: none; background: #303030; border-right: 1px solid #808080; border-bottom: 1px solid #808080; display: flex; align-items: center; justify-content: center; overflow: hidden; }
.ptabs .active { background: #474747; border-bottom: 0; }
.ptabs button:nth-child(6) { width: 27px; border-right: 0; padding-left: 9px; }
.ptabs .arrow { width: 24px; background: #f0f0f0; border: 1px solid #aaa; }
.ptabs .arrow:last-child { width: 19px; }
.tri { border: 4px solid transparent; border-left: 5px solid #111; border-right: 0; }
.tri.left { border-left: 0; border-right: 5px solid #111; }
.filter { display: flex; align-items: center; height: 32px; flex: none; margin: 0 3px; background: #555; border: 1px solid #858585; }
.filter .ic { width: 18px; height: 18px; margin-left: 1px; }
.filter.low { height: 31px; margin-bottom: 2px; margin-left: 2px; }
.filter .caret { align-self: flex-end; margin: 0 0 8px 1px; }
.pane { display: flex; width: 270px; flex: none; }
.pane .tree { flex: 1; overflow: hidden; padding-top: 1px; }
.tree li { height: 24px; display: flex; align-items: center; white-space: pre; }
.tree .ic { width: 18px; height: 18px; margin-right: 5px; }
.lv0 .ic { margin-right: 6px; }
.lv2 { padding-left: 23px; }
.lv3 { padding-left: 46px; }
.tw { width: 24px; padding-left: 5px; flex: none; display: flex; }
.closed { border: 4px solid transparent; border-left: 5px solid #eee; border-right: 0; margin-left: 3px; }
.open { border: 4px solid transparent; border-top: 5px solid #eee; border-bottom: 0; }
.node { display: flex; align-items: center; height: 24px; }
.bold { font-weight: 700; color: #fff; }
.node.selected { background: #0a74d6; padding-right: 8px; }
.vbar { width: 18px; background: #f0f0f0; padding: 21px 4px 0 8px; }
.vbar i { display: block; height: 28px; background: #858585; }
.hbar { width: 270px; height: 21px; flex: none; background: #f0f0f0; padding: 8px 0 0 20px; }
.hbar i { display: block; width: 156px; height: 6px; background: #858585; }
.handle { position: absolute; left: 272px; top: 374px; width: 12px; height: 49px; background: #474747; display: flex; align-items: center; justify-content: center; z-index: 2; }

.view { flex: 1; position: relative; color: #161616; min-width: 0; overflow: hidden; }
.model { position: absolute; left: calc(50% - 335px); top: 190px; width: 680px; height: 440px; }
.fx { fill: #10ae1c; stroke: #0c981c; stroke-width: 5; stroke-dasharray: 8 4; stroke-linejoin: round; }
.mark { position: absolute; left: calc(50% - 478px); top: 299px; height: 96px; line-height: 96px; display: flex; align-items: baseline; white-space: nowrap; color: rgba(255, 255, 255, 0.66); font-family: "Liberation Serif", serif; font-size: 66px; }
.cjk { font: 300 71px/96px "Noto Sans CJK SC", sans-serif; }
.hud { position: absolute; left: calc(50% - 175px); top: 5px; display: flex; }
.hud button { width: 26px; display: flex; align-items: center; }
.hud button.drop { width: 40px; gap: 7px; }
.info { position: absolute; left: 21px; top: 16px; line-height: 20px; }
.legend { position: absolute; right: 200px; top: 147px; width: 123px; line-height: 20px; }
.lb { display: flex; margin-top: 20px; }
.bar { width: 32px; height: 400px; margin-top: 15px; border-top: 1px solid #111; border-bottom: 1px solid #111; background: linear-gradient(180deg, #f00, #ff0 20%, #9cff00 32%, #0f0 50%, #0ff 70%, #00f); }
.ticks { width: 4px; height: 401px; margin-top: 15px; display: flex; flex-direction: column; justify-content: space-between; }
.ticks i { height: 1px; background: #111; }
.vals { margin-left: 12px; display: grid; grid-auto-rows: 40px; }
.triad { position: absolute; left: 14px; bottom: 47px; font: 10px "Noto Sans", sans-serif; }
.task { position: absolute; right: 0; top: 30px; width: 28px; border-top: 1px solid #888; border-left: 1px solid #888; }
.task button { width: 28px; height: 30px; background: #303030; border-bottom: 1px solid #8a8a8a; display: flex; align-items: center; justify-content: center; }
.task .active { background: #b4b4b4; }
.task .ic { width: 19px; height: 19px; }

.sheets { flex: none; height: 22px; display: grid; grid-template-columns: 82px 77px 89px 136px 99px; border-top: 1px solid #b0b0b0; border-bottom: 1px solid #8a8a8a; line-height: 20px; }
.steps { display: flex; padding-left: 2px; background: #303030; }
.steps button { width: 20px; background: #aaa7c2; border-right: 1px solid #77748c; display: flex; align-items: center; justify-content: center; }
.steps svg { width: 11px; height: 11px; fill: #85829c; }
.sheet { background: #303030; border-right: 1px solid #8a8a8a; text-align: center; white-space: nowrap; }
.first-sheet { padding-left: 8px; }
.sheet.active { background: #474747; font-weight: 700; color: #fff; }
.status { flex: none; height: 17px; display: flex; align-items: flex-start; padding-left: 1px; line-height: 24px; overflow: hidden; }
.ver { flex: 1; }
.mode { width: 198px; }
.unit { display: flex; align-items: center; gap: 23px; margin-right: 27px; }
.status .ic { width: 15px; height: 16px; margin-top: 4px; }
</style>
